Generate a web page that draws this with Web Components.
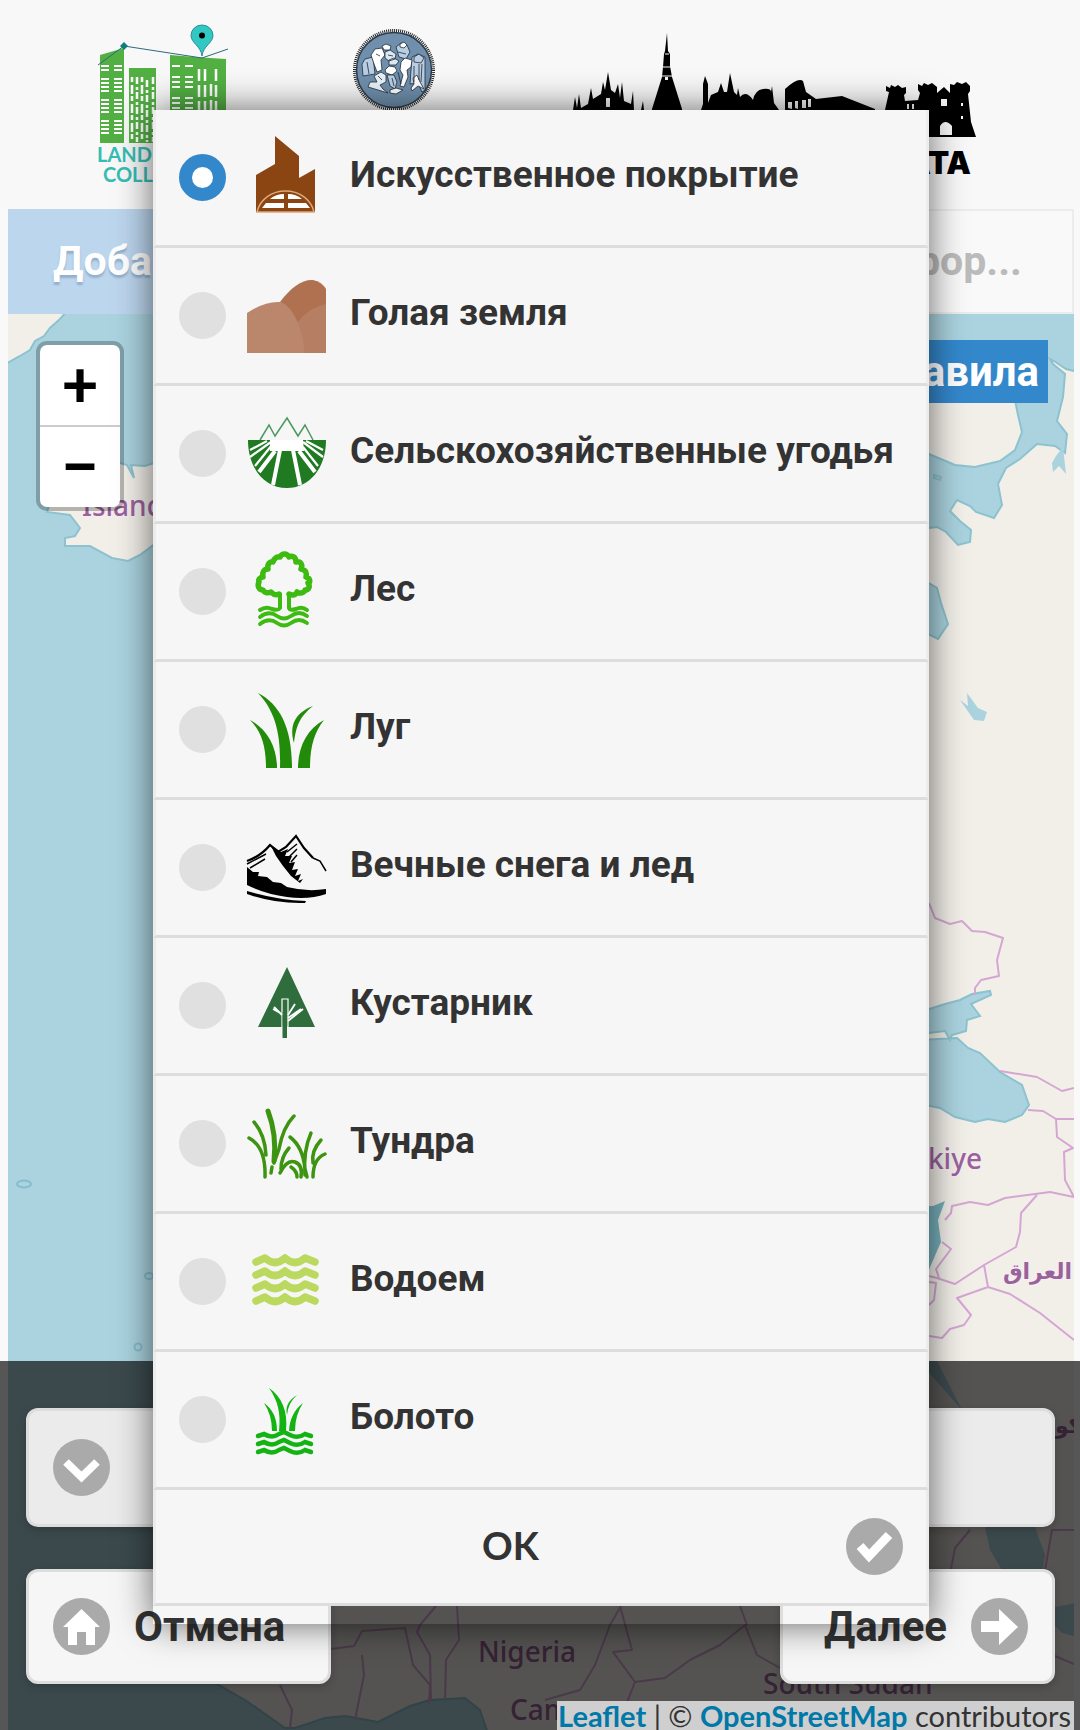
<!DOCTYPE html>
<html lang="ru">
<head>
<meta charset="utf-8">
<meta name="viewport" content="width=device-width, initial-scale=1">
<title>Land Cover Collector</title>
<style>
  body { margin: 0; background: #f9f9f9; font-family: Roboto, "Noto Sans", sans-serif; color: #333; }
</style>
</head>
<body>
<collector-app></collector-app>

<script>
const shared = `
  :host, *, *::before, *::after { box-sizing: border-box; }
  button { font: inherit; color: inherit; cursor: pointer; margin: 0; }
`;

function define(name, markup, setup) {
  const template = document.createElement('template');
  template.innerHTML = markup;
  customElements.define(name, class extends HTMLElement {
    connectedCallback() {
      if (this.shadowRoot) return;
      this.attachShadow({ mode: 'open' }).append(template.content.cloneNode(true));
      if (setup) setup(this, this.shadowRoot);
    }
  });
}

/* ---------- icons of the land cover classes, 79 x 79 ---------- */
const pictures = {
  artificial: `<g transform="translate(-1 -2)"><path fill="#8b4513" d="M29 0 53 20V42L69 33V76H10V39L29 28Z"/>
    <path d="M11 76C14 63 26 55 39.500 55S65 63 68 76Z" fill="#8b4513" stroke="#e0a878" stroke-width="1.500"/>
    <path fill="#fff" d="M38 58V63H24Q30 58 38 58ZM42 58V63H56Q50 58 42 58ZM38 67V72H16L20 67ZM42 67V72H64L60 67Z"/></g>`,
  bare: `<g transform="translate(0 3)"><path fill="#b07150" d="M33 23C44 8 56 0 66 1Q75 3 79 10V74H40Z"/>
    <path fill="#b67e62" d="M50 44Q62 28 79 25V74H40Z"/>
    <path fill="#bb876c" d="M0 34Q18 22 33 23C46 26 57 52 57 74H0Z"/></g>`,
  agri: `<g transform="translate(0 1)"><g fill="none" stroke="#4d9860" stroke-width="1.500"><path d="M13 25 22 10 28 21 40 3 51 21 58 10 66 25"/></g>
    <path fill="#1f7a22" d="M1 25H25V30H23V36H56V30H54V25H79C79 54 62 73 40 73S1 54 1 25Z"/>
    <path fill="#fff" d="M23 25H56L57 36H23Z"/>
    <path stroke="#fff" stroke-width="2.200" d="M3 35 20 26M3 42 24 27M8 51 25 30M76 35 59 26M76 42 56 27M71 51 56 32"/>
    <path stroke="#fff" stroke-width="4" d="M12 57 28 36M26 70 33 35M53 70 46 35M68 57 52 36"/></g>`,
  forest: `<g fill="none" stroke="#3dbb10" stroke-linecap="round" stroke-linejoin="round" transform="translate(-1 0)">
    <path stroke-width="5.500" d="M33 42C29 44 27 42 25 40 21 42 18 40 17 38 13 38 11 34 13 30 12 28 14 25 17 25 16 20 18 17 22 17 21 12 24 9 27 10 28 6 32 4 34 5 36 1 41 1 43 5 46 3 50 5 50 10 55 9 57 13 55 17 60 18 61 21 60 25 64 26 65 30 62 31 65 35 62 38 59 38 58 41 54 42 51 40 50 43 47 44 43 42"/>
    <path stroke-width="4" d="M34 42V56Q32 59 26 57 20 54 14 58M43 42V56Q44 59 50 57 56 54 61 58"/>
    <path stroke-width="3.800" d="M14 65Q23 58 31 64 38 69 45 64 53 58 61 64M14 72Q23 65 31 71 38 76 45 71 53 65 61 71"/></g>`,
  grass: `<g fill="#228b0a" transform="translate(0 3)"><path d="M11 0C34 12 45 36 45 75H33C34 40 28 18 11 0Z"/>
    <path d="M3 27C20 36 30 54 30 75H19C19 52 14 38 3 27Z"/>
    <path d="M77 27C67 40 63 54 63 75H51C51 54 60 36 77 27Z"/>
    <path d="M66 13C52 24 49 34 47 50 42 32 48 20 66 13Z"/></g>`,
  snow: `<g transform="translate(0 6)"><path fill="#000" d="M0 33 6 38 12 38 11 42 20 43 26 48 34 49 40 53Q60 58 79 55V60Q62 66 40 63 18 60 0 51Z"/>
    <path fill="#000" d="M0 57Q30 66 59 67L58 69Q28 70 0 60Z"/>
    <path fill="none" stroke="#000" stroke-width="2.200" d="M0 27Q14 22 23 11L31 18 39 13 49 2 57 14 66 24"/>
    <path fill="none" stroke="#000" stroke-width="1.500" d="M66 24 73 27 79 37M0 30 19 20M3 34 18 25M40 18 50 10M42 23 50 15M44 28 50 21"/>
    <path fill="#000" d="M23 10 29 22 36 32 44 42 53 49 56 45 51 47 54 40 48 42 51 35 45 36 48 28 42 29 45 22 38 22 41 15 34 18Z"/></g>`,
  shrub: `<g transform="translate(0 1)"><path fill="#2f6e3c" d="M40 0 68 60H11Z"/><path fill="#2f6e3c" stroke="#fff" stroke-width="1.200" d="M35 32H41V60H35Z"/>
    <path fill="#2f6e3c" d="M35.500 45H40V71H35.500Z"/>
    <path stroke="#fff" stroke-width="1.800" fill="none" d="M35 48 27 40M35 47 26 42M41 48 48 37M41 54 56 42M41 51 54 42"/></g>`,
  tundra: `<g fill="none" stroke="#3d9410" stroke-linecap="round" stroke-width="3.500" transform="translate(0 3)">
    <path stroke-width="5" d="M21 4Q30 28 27 54"/><path d="M47 9Q36 20 32 42L27 56M7 15Q18 28 19 48M2 31Q19 40 18 70M25 60 24 66"/>
    <path d="M43 30Q56 40 58 62L60 70M64 26Q56 44 58 68M74 33Q64 44 66 56M78 47Q66 52 66 70M42 41Q34 50 34 62M33 66Q40 52 48 55T54 70M44 60Q50 64 50 70"/></g>`,
  water: `<path fill="none" stroke="#bcd95f" stroke-width="7.500" stroke-linecap="round" stroke-linejoin="round" d="
    M9 20 18 16Q28 25 38 16 48 25 58 16L68 20M9 33 18 29Q28 38 38 29 48 38 58 29L68 33
    M9 46 18 42Q28 51 38 42 48 51 58 42L68 46M9 59 18 55Q28 64 38 55 48 64 58 55L68 59"/>`,
  swamp: `<g transform="translate(-1 3)"><g fill="#12b312"><path d="M23 5C36 14 42 28 40 48H33C35 30 32 18 23 5Z"/><path d="M18 20Q31 29 31 48H26Q26 32 18 20Z"/>
    <path d="M57 20Q49 32 49 48H43Q44 30 57 20Z"/><path d="M51 12Q42 20 41 32 38 20 51 12Z"/></g>
    <path fill="none" stroke="#12b312" stroke-width="4.500" stroke-linecap="round" d="
    M12 53 18 51Q26 56 33 51L38 49 44 52Q52 56 59 51L65 53M12 61 18 59Q26 64 33 59L38 57 44 60Q52 64 59 59L65 61M12 69 18 67Q26 72 33 67L38 65 44 68Q52 72 59 67L65 69"/></g>`
};

/* ---------- grey round glyphs ---------- */
const glyphs = {
  down: '<path fill="none" stroke="#fff" stroke-width="8" d="M13 23 28.500 38 44 23"/>',
  home: '<path fill="#fff" d="M28.500 11 47 29H42V47H33V34H24V47H15V29H10Z"/>',
  next: '<path fill="#fff" d="M10 23H28V11L47 29 28 47V34H10Z"/>',
  check: '<path fill="none" stroke="#fff" stroke-width="9" d="M14 28 23 38 43 17"/>'
};
define('round-glyph', `<style>
  :host { display: block; flex: none; width: 57px; height: 57px; }
  svg { display: block; width: 100%; height: 100%; }
</style><svg viewBox="0 0 57 57" aria-hidden="true"><circle cx="28.500" cy="28.500" r="28.500" fill="#aaa"/><g></g></svg>`,
(host, root) => { root.querySelector('g').innerHTML = glyphs[host.getAttribute('name')]; });

/* ---------- logos ---------- */
define('logo-collector', `<style>:host{display:block;flex:none;width:128px;height:176px} svg{display:block;overflow:visible}
  text{font:700 20px Lato,sans-serif;fill:#35bdb4}</style>
<svg width="128" height="176" viewBox="97 15 128 176" role="img" aria-label="Land Cover Collector">
  <path fill="#52b043" d="M100 55 124 48V143H100ZM129 68H156V143H129ZM170 55 195 57 226 59V143H170Z"/>
  <g stroke="#fff" fill="none">
    <path stroke-width="8" stroke-dasharray="2 2 2 7 2 2 2 2" d="M105 65V138M118 65V138"/>
    <path stroke-width="2.500" stroke-dasharray="5 3 9 2" d="M132 77V142M142 77V142"/>
    <path stroke-width="2.500" stroke-dasharray="7 3 3 2" d="M137 77V142M147 80V142M153 77V142"/>
    <path stroke-width="8" stroke-dasharray="2 9 2 3 2 3" d="M176 65V140M189 65V140"/>
    <path stroke-width="2.500" stroke-dasharray="12 4" d="M199 69V140M205 69V140M211 84V140M216 69V140"/>
  </g>
  <path fill="none" stroke="#2c6a80" d="M98 65 124 46 202 58 228 49"/>
  <path fill="#0f7f7c" d="m124 42 4 4-4 4-4-4Z"/>
  <path fill="#33c7c4" stroke="#2a8f96" d="M202 56C201 46 191 43 191 35.500a11 10.500 0 0 1 22 0C213 43 203 46 202 56Z"/>
  <circle cx="202" cy="35.500" r="3"/>
  <text x="97" y="162">LAND COVER</text><text x="103" y="182">COLLECTOR</text>
</svg>`);

define('logo-seal', `<style>:host{display:block;flex:none;width:84px;height:84px} svg{display:block}</style>
<svg width="84" height="84" viewBox="-1 0 84 84" role="img" aria-label="Politecnico">
  <circle cx="42" cy="42" r="39.500" fill="#fff" stroke="#222" stroke-width="3" stroke-dasharray="1 1"/>
  <circle cx="42" cy="42" r="37.500" fill="#6f8fac" stroke="#2b3b4a" stroke-width="1.500"/>
  <g fill="#b9cee2" stroke="#1f2c3a" stroke-width=".8" stroke-linejoin="round">
    <path d="M10 36 13 31 21 29 23 46 11 48ZM60 29 66 26 73 29V62L70 64 66 55 58 56Z"/>
    <path d="M19 27 23 21 30 20 33 27 29 32 30 42 25 44 22 36Z" fill="#fff"/>
    <path d="M30 18 34 16 39 18 38 22 32 22Z" fill="#fff"/>
    <path d="M33 24 38 22 44 26 43 31 37 33 33 30ZM37 32 42 30 47 33 44 37 37 37Z" fill="#dbe7f1"/>
    <path d="M44 19 49 15 55 17 58 24 54 31 47 29Z" /><path d="M48 16 52 14 55 17 52 20 48 19Z" fill="#fff"/>
    <path d="M49 34 53 30 60 32 59 39 55 42 56 49 52 59 48 58 51 47 48 42Z" fill="#fff"/>
    <path d="M33 42 37 38 43 39 45 43 40 47 34 45Z" fill="#fff"/>
    <path d="M62 29 67 26 72 30 69 35 62 34ZM35 47 42 47 45 54 43 61 38 58Z"/>
    <path d="M22 48 29 44 34 47 34 54 28 57 31 61 36 65 26 62 16 59 18 54 25 54Z" fill="#e9f1f8"/>
    <path d="M61 50 65 47 68 54 72 61 66 58 60 63 59 60 62 56ZM38 62 44 60 51 62 44 66 38 65Z" fill="#fff"/>
    <path fill="none" d="M24 26 28 28M15 34 17 46M62 38V54M67 36V52M70 36 69 54M40 50 42 58M46 24 54 26M26 48 30 52M36 27 41 28M46 44 49 56"/>
  </g>
</svg>`);

define('logo-skyline', `<style>:host{display:block;flex:none;width:416px;height:160px} svg{display:block;overflow:visible}
  text{font:900 31px Inter,Roboto,sans-serif;fill:#000}</style>
<svg width="416" height="160" viewBox="560 31 416 160" role="img" aria-label="Urban Geo Big Data">
  <g fill="#000">
    <path d="M573 110 575 97 577 108 579 94 581 108 588 104 591 88 593 99 601 94 603 82 605 90 608 72 611 90 615 93 618 84 620 98 622 82 624 101 631 104 633 91 634 110V140H573Z"/>
    <path d="M641 110 643 101 644 110ZM665 51 667 33 668 51 670 54V66L672 77 682 109V138H652V109L662 77 663 67 664 54Z"/>
    <path d="M701 110 703 104V84L705 76 708 84V103L711 95 718 92 721 83 724 92 727 92 730 73 734 92 737 95 738 88 740 97Q746 90 753 100 755 90 763 89T771 92L772 86 774 103 779 110V140H701Z"/>
    <path d="M785 110V89Q798 77 803 81L806 92 816 99 842 96 875 109V140H785Z"/>
    <path d="M885 110 889 92 886 91V86L890 88 891 85 895 87 898 85 902 88 906 87V93L904 95 905 101 918 100 920 93 918 90V84L922 86 924 83 928 85 932 83 937 87V93L944 87 950 93 950 84 954 85 957 82 962 84 966 82 970 86V91L968 94 971 122 976 137H885Z"/>
  </g>
  <path fill="#f7f7f7" d="M606 107V98h4v9ZM788 108V102h4v7ZM795 108V101h3v8ZM802 108V100h4v8ZM808 107V99h3v8ZM665 77h3v3h-3ZM940 135V126Q945 118 952 126V135ZM941 106V99h6v7ZM907 104h2v5h-2ZM912 104h2v5h-2ZM961 116h2v3h-2ZM961 103h2v3h-2Z"/>
  <g stroke="#f7f7f7"><path d="M663 67H671M662 76H672M665 54H669"/></g>
  <text x="971" y="174" text-anchor="end">DATA</text>
</svg>`);

define('app-header', `<style>${shared}
  :host { display: flex; justify-content: space-between; align-items: flex-start; height: 209px; padding: 15px 104px 0 97px; background: #f8f8f8; overflow: hidden; }
  logo-seal { margin-top: 13px; } logo-skyline { margin-top: 16px; }
</style><logo-collector></logo-collector><logo-seal></logo-seal><logo-skyline></logo-skyline>`);

define('app-tabs', `<style>${shared}
  :host { display: block; padding: 0 6px 0 8px; background: #f9f9f9; }
  nav { display: grid; grid-template-columns: repeat(3, 1fr); height: 105px; }
  button { border: 2px solid #ececec; background: #f9f9f9; padding: 0 43px 2px; font-size: 41px; line-height: 56px; font-weight: 700; color: #bbb; text-align: left; overflow: hidden; white-space: nowrap; }
  .on { background: #bcd6ee; border-color: #bcd6ee; color: #fff; text-shadow: 0 3px 2px rgba(90,120,150,.4); }
  .end { text-align: right; padding-right: 50px; }
</style><nav><button class="on">Добавить</button><button aria-label="Карта"></button><button class="end" disabled>Инфор...</button></nav>`);

define('zoom-control', `<style>${shared}
  :host { display: block; position: absolute; left: 28px; top: 27px; width: 88px; border: 4px solid rgba(0,0,0,.25); border-radius: 11px; background: #fff; background-clip: padding-box; overflow: hidden; }
  button { display: flex; align-items: center; justify-content: center; width: 100%; height: 80px; padding: 0 0 4px; border: 0; background: none; color: #000; font: 900 64px/60px Lato, sans-serif; }
  button + button { height: 82px; border-top: 2px solid #ccc; }
</style><button aria-label="Zoom in">+</button><button aria-label="Zoom out">−</button>`);

define('world-map', `<style>${shared}
  :host { display: block; position: relative; height: 1416px; margin: 0 6px 0 8px; background: #aad3df; overflow: hidden; }
  svg { display: block; width: 100%; height: 100%; }
  .land { fill: #f2efe9; stroke: #8cc3cf; stroke-width: 2; }
  .sea { fill: #aad3df; stroke: #8cc3cf; stroke-width: 2; }
  .line { fill: none; stroke: #d5a6d3; stroke-width: 2; stroke-linejoin: round; }
  text { font: 500 28px "Noto Sans", sans-serif; fill: #9a629b; paint-order: stroke; stroke: #f6eef4; stroke-width: 2px; }
  .ar { font: 700 22px "DejaVu Sans", sans-serif; }
  .plain { stroke: none; }
  .rules { position: absolute; top: 26px; right: 26px; height: 63px; padding: 0 9px; border: 0; background: #3388cc; color: #fff; font-size: 42px; line-height: 56px; font-weight: 700; }
</style>
<svg viewBox="8 314 1066 1416" preserveAspectRatio="xMidYMid slice" role="img" aria-label="OpenStreetMap">
  <path class="land" d="M0 310H68L60 319 50 328 44 336 35 341 30 350 20 356 0 367Z"/>
  <path class="land" d="M60 470 120 463 127 465 134 478 131 465 145 466 160 461 200 480 160 540 140 555 128 561 112 558 90 546 65 546 65 538 75 536 80 528 70 515 47 512Z"/>
  <path class="land" d="M800 395H1014L1018 415 1022 432 1015 450 1000 461 975 467 955 465 929 454 800 460ZM1100 371H1074L1066 369 1054 361 1050 359 1053 364 1065 374 1063 397 1057 421 1067 434 1065 453 1055 446 1037 444 1020 459 1006 468 998 484 1002 505 994 518 976 512 970 506 957 500 950 511 960 521 971 530 970 542 958 545 946 532 937 527 929 528 700 520V1000L600 1300 200 1350 153 1600 217 1684 245 1700 285 1728 295 1728 325 1718 345 1716 378 1722 410 1706 430 1700 465 1698 480 1710 490 1740H1100Z"/>
  <path class="sea" d="M920 578 937 588 941 603 948 624 938 639 920 630ZM934 475 941 477 940 480 934 478Z"/>
  <path class="sea" style="stroke:none" d="M960 700 968 706 967 693 978 708 987 712 984 721 974 720ZM1056 456 1063 447 1066 474 1059 466 1053 472 1052 463Z"/>
  <path class="sea" d="M920 1012 945 1004 960 1000 972 994 990 991 991 995 971 1004 980 1016 967 1020 966 1031 952 1035 950 1040 945 1031 920 1034ZM920 1040 957 1038 968 1048 980 1053 1000 1072 1022 1085 1029 1105 1022 1115 1005 1122 988 1119 975 1122 955 1117 940 1108 920 1104Z"/>
  <path fill="#78b0bd" d="M920 1206H933L945 1201 938 1220 941 1242 920 1290Z"/>
  <path class="sea" style="stroke:none" d="M900 1340 929 1361H937L962 1410 985 1527 990 1550 1005 1575H1042L1045 1555 1035 1527 980 1440 962 1410ZM1040 1610 1080 1602V1638L1062 1633Z"/>
  <path class="line" d="M929 903 935 918 950 924 962 921 972 931 985 932 1003 938 997 960 999 976 981 980 975 988 975 995M1000 1071 1037 1077 1062 1091 1074 1088M1028 1110 1043 1111 1056 1119H1080M1056 1119 1057 1137 1073 1148 1064 1152 1065 1180 1074 1197 1050 1192 1035 1194 1005 1198 988 1205 970 1202 952 1206 951 1213 945 1220M1037 1195 1021 1213 1020 1232 1016 1247 984 1265 955 1284 937 1278 929 1276M942 1242 951 1249 936 1269 939 1278M929 1282 936 1283 934 1300 929 1305M984 1265 988 1287 1010 1294 1040 1313 1074 1340M988 1287 957 1298 971 1315 964 1325 950 1329 942 1338 929 1336"/>
  <path class="line" d="M951 1569 955 1548 970 1530M1045 1570 1052 1530H1074M331 1649 354 1646 362 1631 405 1628 413 1665 430 1685 429 1704M362 1655 364 1675 355 1720M436 1606 420 1625 417 1632 430 1655 431 1700M457 1606 459 1640 446 1660 445 1700M280 1685 292 1710 290 1728M621 1606 610 1625 595 1665 580 1690 545 1700M620 1606 632 1650 613 1652 635 1682 665 1678 690 1660 720 1645 745 1625 757 1655 780 1668M740 1606 747 1625M635 1682 620 1720M1055 1656 1074 1664"/>
  <text x="82" y="516">Ísland</text>
  <text x="982" y="1169" text-anchor="end">Türkiye</text>
  <text class="ar" x="1072" y="1279" text-anchor="end">العراق</text>
  <text class="ar plain" x="1055" y="1433">كو</text>
  <text class="plain" x="478" y="1662">Nigeria</text>
  <text class="plain" x="763" y="1694">South Sudan</text>
  <text class="plain" x="510" y="1720">Cameroun</text>
  <g fill="none" stroke="#86bdcb" stroke-width="2"><ellipse cx="24" cy="1184" rx="7" ry="3.500"/><circle cx="138" cy="1347" r="3.500"/><ellipse cx="149" cy="1276" rx="4" ry="3"/></g>
</svg>
<zoom-control></zoom-control>
<button class="rules">Правила</button>`);

define('action-button', `<style>${shared}
  :host { display: flex; }
  button { display: flex; flex: 1; align-items: center; gap: 24px; min-height: 115px; padding: 0 24px; border: 3px solid #ddd; border-radius: 12px; background: #f6f6f6; box-shadow: 0 3px 9px rgba(0,0,0,.2); font-size: 42px; line-height: 56px; font-weight: 700; }
  :host([tall]) button { min-height: 119px; background: #ebebeb; }
</style><button><slot></slot></button>`, (host, root) => {
  if (host.hasAttribute('label')) root.querySelector('button').setAttribute('aria-label', host.getAttribute('label'));
});

define('bottom-panel', `<style>${shared}
  :host { display: flex; flex-direction: column; gap: 42px; position: absolute; left: 0; right: 0; bottom: 0; height: 369px; padding: 47px 25px 0 26px; background: rgba(0,0,0,.655); }
  .row { display: flex; justify-content: space-between; }
  .back { width: 305px; } .next { width: 275px; }
  .next span { flex: 1; text-align: right; }
</style>
<action-button tall label="Выбрать класс"><round-glyph name="down"></round-glyph></action-button>
<div class="row">
  <action-button class="back"><round-glyph name="home"></round-glyph><span>Отмена</span></action-button>
  <action-button class="next"><span>Далее</span><round-glyph name="next"></round-glyph></action-button>
</div>`);

define('map-credit', `<style>${shared}
  :host { display: block; position: absolute; right: 6px; bottom: 0; height: 29px; padding: 0 3px 0 1px; background: #cfcfcf; font: 29px/29px Lato, sans-serif; color: #333; white-space: nowrap; }
  a { color: #0078a8; text-decoration: none; font-weight: 700; }
</style><a href="#leaflet">Leaflet</a> | © <a href="#osm">OpenStreetMap</a> contributors`);

define('cover-option', `<style>${shared}
  :host { display: block; }
  label { display: flex; align-items: center; height: 138px; padding-left: 23px; border: solid #ddd; border-width: 0 3px 3px; border-left-color: #ececec; border-right-color: #ececec; background: #f6f6f6; font-size: 37px; line-height: 48px; font-weight: 700; }
  input { appearance: none; flex: none; width: 47px; height: 47px; margin: 0 21px 0 0; border-radius: 50%; background: #e0e0e0; }
  input:checked { background: #fff; border: 13px solid #3388cc; }
  svg { flex: none; width: 79px; height: 79px; margin: 0 24px 0 0; overflow: visible; }
  span { padding-bottom: 6px; white-space: nowrap; }
</style><label><input type="radio"><svg viewBox="0 0 79 79" aria-hidden="true"></svg><span><slot></slot></span></label>`,
(host, root) => {
  root.querySelector('svg').innerHTML = pictures[host.getAttribute('kind')];
  root.querySelector('input').checked = host.hasAttribute('checked');
});

define('cover-dialog', `<style>${shared}
  :host { display: block; position: absolute; left: 153px; right: 151px; top: 110px; padding-bottom: 18px; border-radius: 6px 6px 0 0; box-shadow: 0 0 36px rgba(0,0,0,.6); }
  .ok { display: flex; align-items: center; width: 100%; height: 116px; padding: 0 23px 0 0; border: solid #ddd; border-width: 0 3px 3px; border-left-color: #ececec; border-right-color: #ececec; background: #f6f6f6; font: 700 38px/56px Lato, sans-serif; }
  .ok span { flex: 1; padding: 0 0 4px 19px; text-align: center; }
</style>
<slot></slot>
<button class="ok"><span>OK</span><round-glyph name="check"></round-glyph></button>`);

define('collector-app', `<style>
  :host { display: block; position: relative; overflow: hidden; }
</style>
<app-header></app-header>
<app-tabs></app-tabs>
<world-map></world-map>
<bottom-panel></bottom-panel>
<map-credit></map-credit>
<cover-dialog role="dialog">
  <cover-option kind="artificial" checked>Искусственное покрытие</cover-option>
  <cover-option kind="bare">Голая земля</cover-option>
  <cover-option kind="agri">Сельскохозяйственные угодья</cover-option>
  <cover-option kind="forest">Лес</cover-option>
  <cover-option kind="grass">Луг</cover-option>
  <cover-option kind="snow">Вечные снега и лед</cover-option>
  <cover-option kind="shrub">Кустарник</cover-option>
  <cover-option kind="tundra">Тундра</cover-option>
  <cover-option kind="water">Водоем</cover-option>
  <cover-option kind="swamp">Болото</cover-option>
</cover-dialog>`);
</script>
</body>
</html>
